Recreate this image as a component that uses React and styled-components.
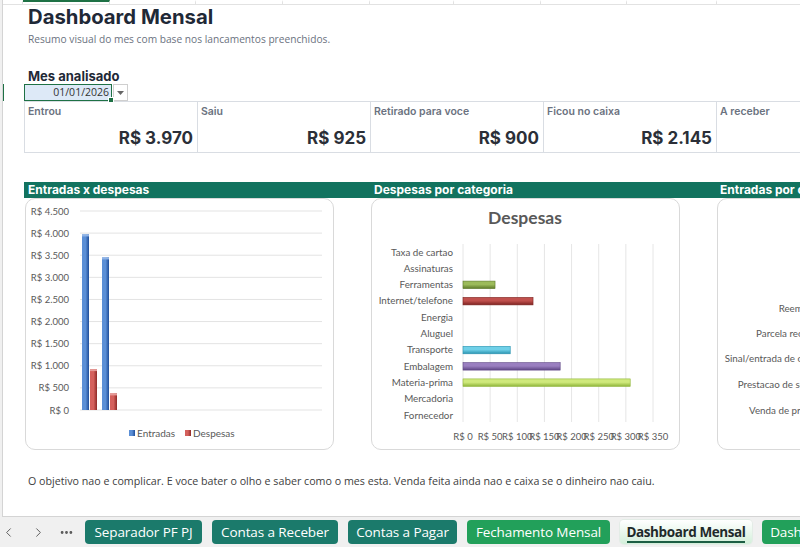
import React from 'react';
import styled, { createGlobalStyle } from 'styled-components';
import { ChevronLeft, ChevronRight, MoreHorizontal } from 'lucide-react';

const GlobalStyle = createGlobalStyle`
  html, body {
    margin: 0;
    padding: 0;
    background: #ffffff;
  }
  body {
    font-family: "Inter", "Open Sans", sans-serif;
    overflow: hidden;
  }
`;

const kpis = [
  { label: 'Entrou', value: 'R$ 3.970' },
  { label: 'Saiu', value: 'R$ 925' },
  { label: 'Retirado para voce', value: 'R$ 900' },
  { label: 'Ficou no caixa', value: 'R$ 2.145' },
  { label: 'A receber', value: '' },
];

const despesas = [
  { name: 'Taxa de cartao', value: 0, color: 'lime' },
  { name: 'Assinaturas', value: 0, color: 'lime' },
  { name: 'Ferramentas', value: 59, color: 'olive' },
  { name: 'Internet/telefone', value: 129, color: 'wine' },
  { name: 'Energia', value: 0, color: 'lime' },
  { name: 'Aluguel', value: 0, color: 'lime' },
  { name: 'Transporte', value: 87, color: 'cyan' },
  { name: 'Embalagem', value: 179, color: 'purple' },
  { name: 'Materia-prima', value: 308, color: 'lime' },
  { name: 'Mercadoria', value: 0, color: 'lime' },
  { name: 'Fornecedor', value: 0, color: 'lime' },
];

const entradasCat = [
  'Reembolso',
  'Parcela recebida',
  'Sinal/entrada de cliente',
  'Prestacao de servico',
  'Venda de produto',
];

const fluxo = [
  { entrou: 3970, saiu: 925 },
  { entrou: 3450, saiu: 375 },
];

const tabs = [
  { name: 'Separador PF PJ', kind: 'teal', width: 117 },
  { name: 'Contas a Receber', kind: 'teal', width: 126 },
  { name: 'Contas a Pagar', kind: 'teal', width: 109 },
  { name: 'Fechamento Mensal', kind: 'green', width: 143 },
  { name: 'Dashboard Mensal', kind: 'active', width: 132 },
  { name: 'Dashboard Anual', kind: 'green', width: 124 },
];

const gradients = {
  blue: ['#5b8fd6', '#1f4e9a'],
  red: ['#d4605c', '#8e2a27'],
  olive: ['#9cbb5a', '#5d7a29'],
  wine: ['#c0504d', '#7d2321'],
  cyan: ['#6fd0e8', '#2a93b0'],
  purple: ['#9a7fc0', '#5f4685'],
  lime: ['#cfe97c', '#8fb53a'],
};

const Gradients = () => (
  <defs>
    {Object.entries(gradients).map(([key, [a, b]]) => (
      <linearGradient key={key} id={`g-${key}`} x1="0" y1="0" x2="0" y2="1">
        <stop offset="0%" stopColor={a} />
        <stop offset="45%" stopColor={a} />
        <stop offset="100%" stopColor={b} />
      </linearGradient>
    ))}
    {Object.entries(gradients).map(([key, [a, b]]) => (
      <linearGradient key={key} id={`v-${key}`} x1="0" y1="0" x2="1" y2="0">
        <stop offset="0%" stopColor={a} />
        <stop offset="50%" stopColor={a} />
        <stop offset="100%" stopColor={b} />
      </linearGradient>
    ))}
  </defs>
);

const chartFont = '"Lato", "Liberation Sans", sans-serif';

const FluxoChart = () => {
  const y = (v) => 212 - v * (199 / 4500);
  const ticks = [0, 500, 1000, 1500, 2000, 2500, 3000, 3500, 4000, 4500];
  return (
    <svg width="309" height="252" fontFamily={chartFont}>
      <Gradients />
      {ticks.map((t) => (
        <g key={t}>
          <line x1="55" x2="297" y1={y(t)} y2={y(t)} stroke="#e3e3e3" strokeWidth="1" />
          <text x="44" y={y(t) + 3.5} fontSize="9.5" fill="#595959" textAnchor="end">
            {t === 0 ? 'R$ 0' : `R$ ${t.toLocaleString('pt-BR')}`}
          </text>
        </g>
      ))}
      {fluxo.map((g, i) => {
        const x = 57 + i * 20;
        return (
          <g key={i}>
            <rect x={x} y={y(g.entrou)} width="7" height={212 - y(g.entrou)} fill="url(#v-blue)" />
            <rect x={x} y={y(g.entrou)} width="7" height="2" fill="#8fb3e6" />
            <rect x={x + 8} y={y(g.saiu)} width="7" height={212 - y(g.saiu)} fill="url(#v-red)" />
            <rect x={x + 8} y={y(g.saiu)} width="7" height="2" fill="#e59a97" />
          </g>
        );
      })}
      <rect x="104" y="232" width="6" height="6" fill="url(#v-blue)" />
      <text x="112" y="238.5" fontSize="10" fill="#595959">Entradas</text>
      <rect x="160" y="232" width="6" height="6" fill="url(#v-red)" />
      <text x="168" y="238.5" fontSize="10" fill="#595959">Despesas</text>
    </svg>
  );
};

const DespesasChart = () => {
  const step = 190 / 350;
  const gridX = (k) => 92 + k * 50 * step;
  const rowY = (i) => 54 + i * 16.3;
  return (
    <svg width="309" height="252" fontFamily={chartFont}>
      <Gradients />
      <text x="154" y="26" fontSize="17.5" fontWeight="700" fill="#595959" textAnchor="middle">
        Despesas
      </text>
      {[0, 1, 2, 3, 4, 5, 6, 7].map((k) => (
        <g key={k}>
          <line x1={gridX(k)} x2={gridX(k)} y1="46" y2="224" stroke="#e6e6e6" strokeWidth="1" />
          <text x={gridX(k)} y="242" fontSize="9.5" fill="#595959" textAnchor="middle">
            {`R$ ${k * 50}`}
          </text>
        </g>
      ))}
      {despesas.map((d, i) => (
        <g key={d.name}>
          <text x="82" y={rowY(i) + 3.5} fontSize="9.8" fill="#595959" textAnchor="end">
            {d.name}
          </text>
          {d.value > 0 && (
            <rect
              x="92"
              y={rowY(i) - 3.5}
              width={d.value * step}
              height="7.5"
              fill={`url(#g-${d.color})`}
              stroke={gradients[d.color][1]}
              strokeWidth="0.6"
            />
          )}
        </g>
      ))}
    </svg>
  );
};

const EntradasCatChart = () => (
  <svg width="309" height="252" fontFamily={chartFont}>
    {entradasCat.map((c, i) => (
      <text key={c} x="109" y={[110, 135, 160, 186, 212][i] + 3.5} fontSize="9.8" fill="#595959" textAnchor="end">
        {c}
      </text>
    ))}
  </svg>
);

const App = () => (
  <>
    <GlobalStyle />
    <Page>
      <Sheet>
        <TopStrip>
          {[20, 87, 86, 87, 87, 84, 87, 86, 90].map((w, i) => (
            <TopCell key={i} width={w} selected={i === 1} />
          ))}
        </TopStrip>
        <RowMarker />
        <Content>
          <Title>Dashboard Mensal</Title>
          <Subtitle>Resumo visual do mes com base nos lancamentos preenchidos.</Subtitle>
          <SectionLabel>Mes analisado</SectionLabel>
          <DateRow>
            <DateCell>
              01/01/2026
              <FillHandle />
            </DateCell>
            <DropButton>
              <svg width="7" height="4" viewBox="0 0 7 4">
                <path d="M0 0 L7 0 L3.5 4 Z" fill="#666" />
              </svg>
            </DropButton>
          </DateRow>
          <KpiRow>
            {kpis.map((k) => (
              <KpiCell key={k.label}>
                <KpiLabel>{k.label}</KpiLabel>
                <KpiValue>{k.value}</KpiValue>
              </KpiCell>
            ))}
          </KpiRow>
          <ChartsRow>
            <ChartColumn>
              <BandTitle>Entradas x despesas</BandTitle>
              <Card>
                <FluxoChart />
              </Card>
            </ChartColumn>
            <ChartColumn>
              <BandTitle>Despesas por categoria</BandTitle>
              <Card>
                <DespesasChart />
              </Card>
            </ChartColumn>
            <ChartColumn>
              <BandTitle>Entradas por categoria</BandTitle>
              <Card>
                <EntradasCatChart />
              </Card>
            </ChartColumn>
          </ChartsRow>
          <Note>
            O objetivo nao e complicar. E voce bater o olho e saber como o mes esta. Venda feita ainda nao e caixa se o dinheiro nao caiu.
          </Note>
        </Content>
      </Sheet>
      <TabBar>
        <NavButton width={30}><ChevronLeft size={15} strokeWidth={1.5} /></NavButton>
        <NavButton width={28}><ChevronRight size={15} strokeWidth={1.5} /></NavButton>
        <NavButton width={27}><MoreHorizontal size={15} strokeWidth={2.5} /></NavButton>
        <Tabs>
          {tabs.map((t) => (
            <Tab key={t.name} kind={t.kind} width={t.width}>{t.name}</Tab>
          ))}
        </Tabs>
      </TabBar>
    </Page>
  </>
);

const Page = styled.div`
  width: 800px;
  height: 547px;
  display: flex;
  flex-direction: column;
  overflow: hidden;
  background: #f0f0f0;
`;

const Sheet = styled.div`
  position: relative;
  flex: 0 0 516px;
  margin-left: 2px;
  background: #ffffff;
  border-left: 1px solid #d4d4d4;
  border-bottom: 1px solid #d4d4d4;
  overflow: hidden;
`;

const TopStrip = styled.div`
  display: flex;
  height: 4px;
  border-bottom: 1px solid #e2e2e2;
`;

const TopCell = styled.div`
  flex: 0 0 ${({ width }) => width}px;
  border-right: 1px solid #e2e2e2;
  box-sizing: border-box;
  border-top: 2px solid ${({ selected }) => (selected ? '#1e7145' : 'transparent')};
`;

const RowMarker = styled.div`
  position: absolute;
  left: -1px;
  top: 84px;
  width: 2px;
  height: 17px;
  background: #1e7145;
`;

const Content = styled.div`
  padding-left: 21px;
  width: 1200px;
`;

const Title = styled.h1`
  margin: 0 0 0 4px;
  font-family: "Inter", sans-serif;
  font-size: 20.3px;
  line-height: 24px;
  font-weight: 700;
  color: #1f2937;
`;

const Subtitle = styled.p`
  margin: 4px 0 0 4px;
  font-family: "Open Sans", sans-serif;
  font-size: 10.2px;
  line-height: 13px;
  color: #6b7280;
`;

const SectionLabel = styled.h2`
  margin: 22px 0 0 4px;
  font-family: "Inter", sans-serif;
  font-size: 13px;
  line-height: 16px;
  font-weight: 700;
  color: #1f2937;
`;

const DateRow = styled.div`
  display: flex;
  align-items: stretch;
  height: 17px;
`;

const DateCell = styled.div`
  position: relative;
  width: 88px;
  box-sizing: border-box;
  border: 1.5px solid #1e7145;
  background: #dde9f7;
  font-family: "Open Sans", sans-serif;
  font-size: 10.5px;
  line-height: 14px;
  color: #333;
  text-align: right;
  padding-right: 2px;
`;

const FillHandle = styled.span`
  position: absolute;
  right: -3px;
  bottom: -3px;
  width: 4px;
  height: 4px;
  background: #1e7145;
  border: 1px solid #fff;
`;

const DropButton = styled.div`
  width: 15px;
  margin-left: 1px;
  box-sizing: border-box;
  border: 1px solid #cfcfcf;
  background: #fff;
  display: flex;
  align-items: center;
  justify-content: center;
`;

const KpiRow = styled.div`
  display: grid;
  grid-template-columns: repeat(5, 173px);
  height: 52px;
  border-top: 1px solid #d9dde3;
  border-bottom: 1px solid #d9dde3;
  border-left: 1px solid #d9dde3;
  box-sizing: border-box;
`;

const KpiCell = styled.div`
  display: flex;
  flex-direction: column;
  justify-content: space-between;
  padding: 3px 4px 3px 3px;
  border-right: 1px solid #d9dde3;
`;

const KpiLabel = styled.span`
  font-family: "Inter", sans-serif;
  font-size: 10.5px;
  line-height: 14px;
  font-weight: 600;
  color: #6b7280;
`;

const KpiValue = styled.span`
  font-family: "Inter", sans-serif;
  font-size: 17px;
  line-height: 22px;
  font-weight: 700;
  color: #2b2f38;
  text-align: right;
`;

const ChartsRow = styled.div`
  display: grid;
  grid-template-columns: repeat(3, 346px);
  margin-top: 29px;
`;

const ChartColumn = styled.div`
  display: flex;
  flex-direction: column;
`;

const BandTitle = styled.div`
  height: 16px;
  background: #12735f;
  color: #ffffff;
  font-family: "Inter", sans-serif;
  font-size: 12px;
  line-height: 16px;
  font-weight: 700;
  padding-left: 4px;
  white-space: nowrap;
`;

const Card = styled.div`
  width: 309px;
  height: 252px;
  margin-left: 1px;
  box-sizing: border-box;
  border: 1px solid #d9d9d9;
  border-radius: 10px;
  background: #ffffff;
  overflow: hidden;

  svg {
    display: block;
    margin: -1px;
  }
`;

const Note = styled.p`
  margin: 24px 0 0 4px;
  font-family: "Open Sans", sans-serif;
  font-size: 10.7px;
  line-height: 14px;
  color: #404040;
`;

const TabBar = styled.div`
  flex: 1;
  display: flex;
  align-items: center;
`;

const NavButton = styled.div`
  flex: 0 0 ${({ width }) => width}px;
  display: flex;
  align-items: center;
  padding-left: 1px;
  box-sizing: border-box;
  color: #555;
`;

const Tabs = styled.div`
  display: flex;
  gap: 10px;
  flex-shrink: 0;
`;

const tabBg = {
  teal: '#1b7a6b',
  green: '#22a05a',
  active: 'linear-gradient(#ffffff, #d3efda)',
};

const Tab = styled.div`
  position: relative;
  flex: 0 0 ${({ width }) => width}px;
  height: 24px;
  border-radius: 4px;
  background: ${({ kind }) => tabBg[kind]};
  color: ${({ kind }) => (kind === 'active' ? '#1f2a2a' : '#ffffff')};
  font-family: "Open Sans", sans-serif;
  font-size: 13.5px;
  font-weight: ${({ kind }) => (kind === 'active' ? 700 : 400)};
  letter-spacing: ${({ kind }) => (kind === 'active' ? '-0.4px' : '-0.1px')};
  line-height: 24px;
  text-align: center;
  white-space: nowrap;
  ${({ kind }) => kind === 'active' && `
    box-shadow: 0 0 0 1px #e3ece6;
    &::after {
      content: '';
      position: absolute;
      left: 7px;
      right: 7px;
      bottom: 1px;
      height: 2px;
      background: #1d5e44;
    }
  `}
`;

export default App;
